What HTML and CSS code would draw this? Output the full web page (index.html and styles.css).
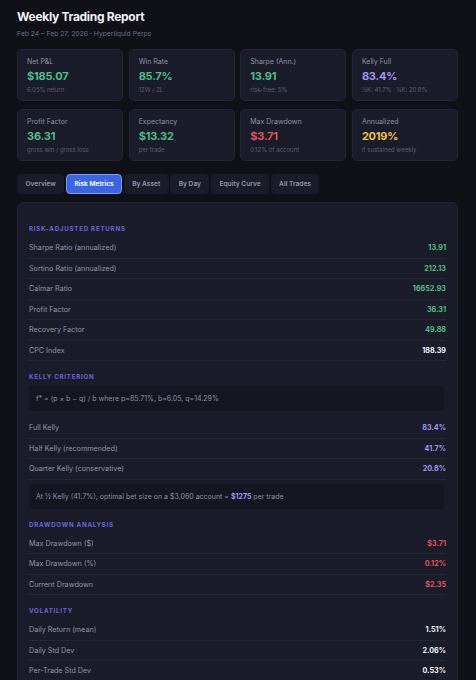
FILE: index.html
```html
<!DOCTYPE HTML>
<html>

<head>
  <meta charset="utf-8">
  <link rel="stylesheet" href="styles.css">
</head>

<body>
<div class="page">
  <h1 class="title">Weekly Trading Report</h1>
  <p class="subtitle">Feb 24 – Feb 27, 2026 · Hyperliquid Perps</p>

  <div class="cards">
    <div class="card">
      <div class="card-label">Net P&amp;L</div>
      <div class="card-value green">$185.07</div>
      <div class="card-sub">6.05% return</div>
    </div>
    <div class="card">
      <div class="card-label">Win Rate</div>
      <div class="card-value green">85.7%</div>
      <div class="card-sub">12W / 2L</div>
    </div>
    <div class="card">
      <div class="card-label">Sharpe (Ann.)</div>
      <div class="card-value green">13.91</div>
      <div class="card-sub">risk-free: 5%</div>
    </div>
    <div class="card">
      <div class="card-label">Kelly Full</div>
      <div class="card-value purple">83.4%</div>
      <div class="card-sub">½K: 41.7% · ¼K: 20.8%</div>
    </div>
    <div class="card">
      <div class="card-label">Profit Factor</div>
      <div class="card-value green">36.31</div>
      <div class="card-sub">gross win / gross loss</div>
    </div>
    <div class="card">
      <div class="card-label">Expectancy</div>
      <div class="card-value green">$13.32</div>
      <div class="card-sub">per trade</div>
    </div>
    <div class="card">
      <div class="card-label">Max Drawdown</div>
      <div class="card-value red">$3.71</div>
      <div class="card-sub">0.12% of account</div>
    </div>
    <div class="card">
      <div class="card-label">Annualized</div>
      <div class="card-value yellow">2019%</div>
      <div class="card-sub">if sustained weekly</div>
    </div>
  </div>

  <div class="tabs">
    <button class="tab">Overview</button>
    <button class="tab active">Risk Metrics</button>
    <button class="tab">By Asset</button>
    <button class="tab">By Day</button>
    <button class="tab">Equity Curve</button>
    <button class="tab">All Trades</button>
  </div>

  <div class="panel">
    <div class="section">
      <h3 class="section-title">Risk-Adjusted Returns</h3>
      <div class="row"><span>Sharpe Ratio (annualized)</span><b class="green">13.91</b></div>
      <div class="row"><span>Sortino Ratio (annualized)</span><b class="green">212.13</b></div>
      <div class="row"><span>Calmar Ratio</span><b class="green">16652.93</b></div>
      <div class="row"><span>Profit Factor</span><b class="green">36.31</b></div>
      <div class="row"><span>Recovery Factor</span><b class="green">49.88</b></div>
      <div class="row"><span>CPC Index</span><b>188.39</b></div>
    </div>

    <div class="section">
      <h3 class="section-title">Kelly Criterion</h3>
      <div class="note note-top">f* = (p × b − q) / b where p=85.71%, b=6.05, q=14.29%</div>
      <div class="row"><span>Full Kelly</span><b class="purple">83.4%</b></div>
      <div class="row"><span>Half Kelly (recommended)</span><b class="purple">41.7%</b></div>
      <div class="row"><span>Quarter Kelly (conservative)</span><b class="purple">20.8%</b></div>
      <div class="note note-bottom">At ½ Kelly (41.7%), optimal bet size on a $3,060 account = <b class="purple">$1275</b> per trade</div>
    </div>

    <div class="section">
      <h3 class="section-title">Drawdown Analysis</h3>
      <div class="row"><span>Max Drawdown ($)</span><b class="red">$3.71</b></div>
      <div class="row"><span>Max Drawdown (%)</span><b class="red">0.12%</b></div>
      <div class="row"><span>Current Drawdown</span><b class="red">$2.35</b></div>
    </div>

    <div class="section">
      <h3 class="section-title">Volatility</h3>
      <div class="row"><span>Daily Return (mean)</span><b>1.51%</b></div>
      <div class="row"><span>Daily Std Dev</span><b>2.06%</b></div>
      <div class="row"><span>Per-Trade Std Dev</span><b>0.53%</b></div>
    </div>
  </div>
</div>
</body>

</html>
```

FILE: styles.css
```css
body {
  margin: 0;
  background-color: #101019;
  color: #e6e7ee;
  font-family: Inter, "Noto Sans", sans-serif;
}

.page {
  padding: 9px 18px 20px 17px;
}

.title {
  margin: 0;
  font-size: 12px;
  line-height: 16px;
  font-weight: 700;
  letter-spacing: -0.3px;
  color: #f2f3f7;
}

.subtitle {
  margin: 4px 0 0;
  font-size: 6.8px;
  line-height: 10px;
  color: #6d6f80;
}

/* карточки со сводкой */

.cards {
  display: grid;
  grid-template-columns: repeat(4, 1fr);
  gap: 8px 5.5px;
  margin-top: 10px;
}

.card {
  height: 52px;
  box-sizing: border-box;
  padding: 8px 9px;
  background-color: #1b1c29;
  border: 1px solid #232535;
  border-radius: 5px;
}

.card-label {
  font-size: 7px;
  line-height: 8px;
  color: #8e90a2;
}

.card-value {
  margin-top: 3px;
  font-size: 11px;
  line-height: 15px;
  font-weight: 700;
  letter-spacing: -0.2px;
}

.card-sub {
  margin-top: 2px;
  font-size: 6px;
  line-height: 8px;
  color: #5d5f70;
}

.green {
  color: #4fbd8a;
}

.purple {
  color: #a394f5;
}

.red {
  color: #e0525e;
}

.yellow {
  color: #f2c14e;
}

/* вкладки */

.tabs {
  display: flex;
  gap: 1.5px;
  margin-top: 13px;
}

.tab {
  height: 20px;
  padding: 0 7.5px;
  font-family: inherit;
  font-size: 6.6px;
  font-weight: 600;
  color: #9496a8;
  background-color: #1b1c29;
  border: 1px solid #1b1c29;
  border-radius: 4px;
}

.tab.active {
  color: #fff;
  background-color: #3a64e0;
  border-color: #7d99ee;
}

/* основная панель */

.panel {
  margin-top: 8px;
  padding: 21px 11px 20px;
  background-color: #1b1c29;
  border: 1px solid #222434;
  border-radius: 6px;
}

.section + .section {
  margin-top: 11px;
}

.section-title {
  margin: 0 0 4px;
  font-size: 6.2px;
  line-height: 10px;
  font-weight: 700;
  letter-spacing: 0.75px;
  text-transform: uppercase;
  color: #6a64dc;
}

.row {
  display: flex;
  justify-content: space-between;
  align-items: center;
  height: 20.5px;
  box-sizing: border-box;
  border-bottom: 1px solid #252737;
  font-size: 7.2px;
}

.row span {
  color: #9294a6;
}

.row b {
  font-weight: 700;
  color: #eef0f5;
}

.row b.green {
  color: #4fbd8a;
}

.row b.purple {
  color: #a394f5;
}

.row b.red {
  color: #e0525e;
}

.note {
  padding: 8px 7px;
  font-size: 7px;
  line-height: 9px;
  color: #8e90a2;
  background-color: #151621;
  border-radius: 4px;
}

.note-top {
  margin: 2px 2px 7px 0;
}

.note-bottom {
  margin: 4px 2px 0 0;
}
```
